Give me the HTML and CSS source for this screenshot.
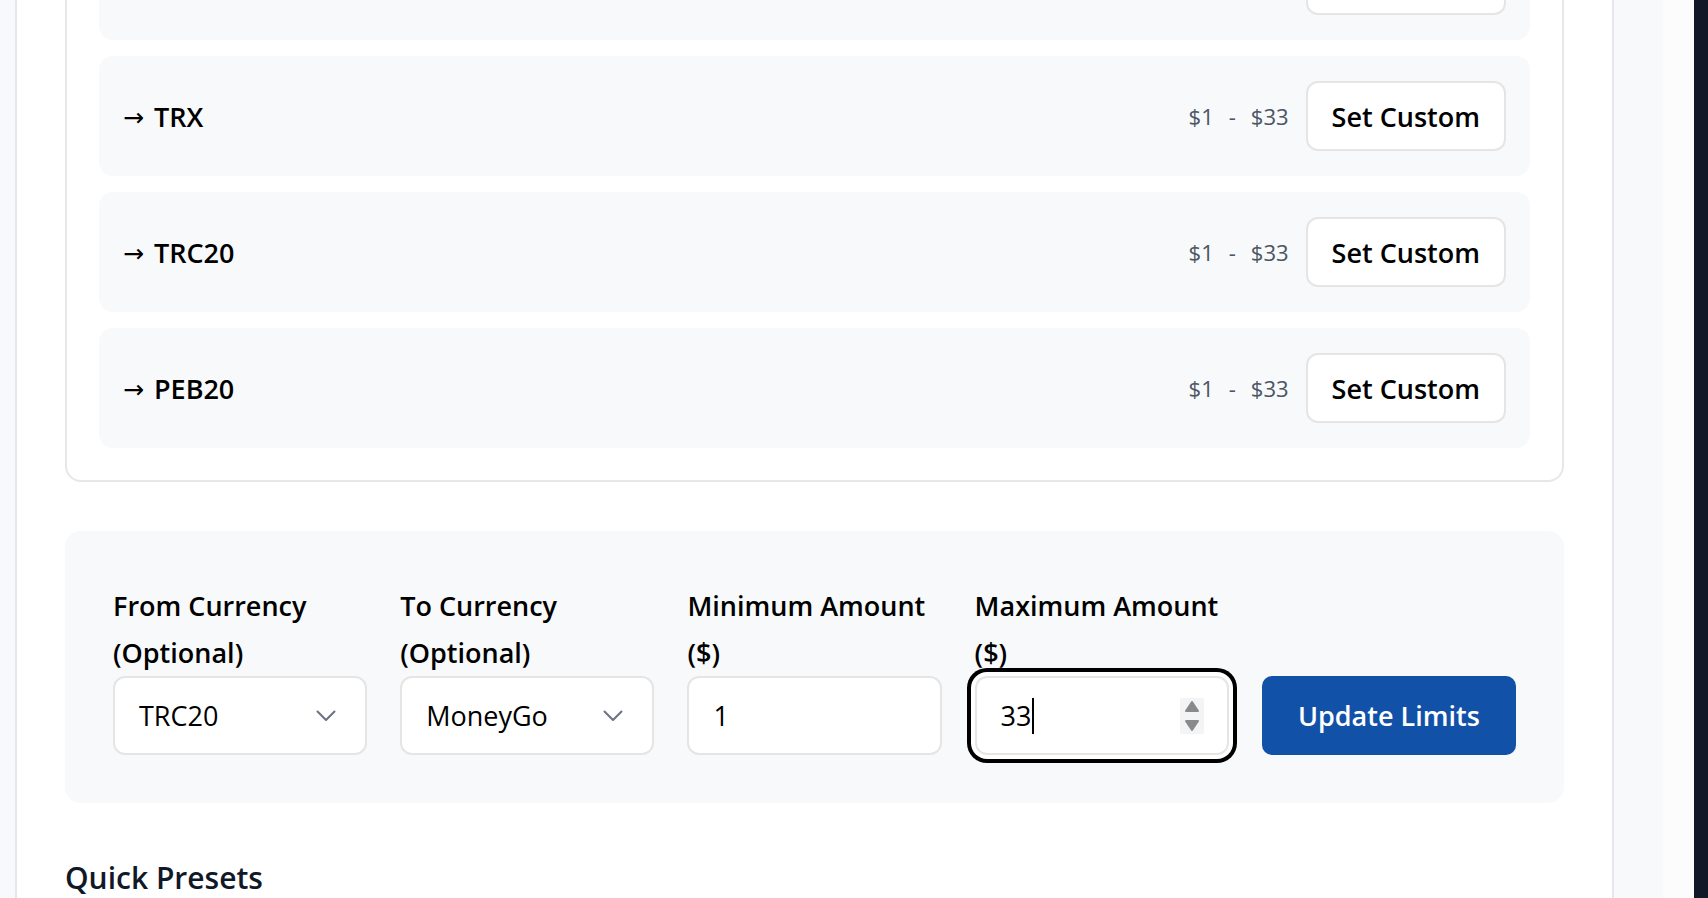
FILE: index.html
```html
<!DOCTYPE html>
<html lang="en">
<head>
<meta charset="utf-8">
<title>Exchange Limits</title>
<link rel="stylesheet" href="styles.css">
</head>
<body>
<div class="screen">
  <div class="gutter-left"></div>
  <main class="main">
    <section class="card">
      <div class="route-row">
        <span class="route-name"><span class="arrow">→</span> USDT</span>
        <div class="route-right">
          <div class="range"><span>$1</span><span>-</span><span>$33</span></div>
          <button class="btn-outline" type="button">Set Custom</button>
        </div>
      </div>
      <div class="route-row">
        <span class="route-name"><span class="arrow">→</span> TRX</span>
        <div class="route-right">
          <div class="range"><span>$1</span><span>-</span><span>$33</span></div>
          <button class="btn-outline" type="button">Set Custom</button>
        </div>
      </div>
      <div class="route-row">
        <span class="route-name"><span class="arrow">→</span> TRC20</span>
        <div class="route-right">
          <div class="range"><span>$1</span><span>-</span><span>$33</span></div>
          <button class="btn-outline" type="button">Set Custom</button>
        </div>
      </div>
      <div class="route-row">
        <span class="route-name"><span class="arrow">→</span> PEB20</span>
        <div class="route-right">
          <div class="range"><span>$1</span><span>-</span><span>$33</span></div>
          <button class="btn-outline" type="button">Set Custom</button>
        </div>
      </div>
    </section>

    <form class="limits">
      <div class="field">
        <label class="field-label">From Currency (Optional)</label>
        <div class="control">
          <span>TRC20</span>
          <svg class="chevron" width="20" height="12" viewBox="0 0 20 12"><path d="M1.5 1.5 L10 10 L18.5 1.5" fill="none" stroke="#6b7280" stroke-width="2" stroke-linecap="round" stroke-linejoin="round"/></svg>
        </div>
      </div>
      <div class="field">
        <label class="field-label">To Currency (Optional)</label>
        <div class="control">
          <span>MoneyGo</span>
          <svg class="chevron" width="20" height="12" viewBox="0 0 20 12"><path d="M1.5 1.5 L10 10 L18.5 1.5" fill="none" stroke="#6b7280" stroke-width="2" stroke-linecap="round" stroke-linejoin="round"/></svg>
        </div>
      </div>
      <div class="field">
        <label class="field-label">Minimum Amount ($)</label>
        <div class="control">
          <span>1</span>
        </div>
      </div>
      <div class="field">
        <label class="field-label">Maximum Amount ($)</label>
        <div class="control control-focus">
          <span class="value">33<span class="caret"></span></span>
          <svg class="spinner" width="24" height="36" viewBox="0 0 24 36"><rect x="0" y="0" width="24" height="36" fill="#f3f4f6"/><path d="M12 4 L18 13 L6 13 Z" fill="#8a8a8a" stroke="#8a8a8a" stroke-width="2" stroke-linejoin="round"/><path d="M6 23 L18 23 L12 32 Z" fill="#8a8a8a" stroke="#8a8a8a" stroke-width="2" stroke-linejoin="round"/></svg>
        </div>
      </div>
      <button class="btn-primary" type="button">Update Limits</button>
    </form>

    <h2 class="section-title">Quick Presets</h2>
  </main>
  <div class="gutter-right"><div class="gutter-a"></div><div class="gutter-b"></div></div>
  <div class="edge-dark"></div>
</div>
</body>
</html>
```
FILE: styles.css
```css
html, body {
  margin: 0;
  padding: 0;
}

body {
  font-family: "Open Sans", "Noto Sans", sans-serif;
  color: #000;
}

.screen {
  display: flex;
  height: 898px;
  overflow: hidden;
  background: #f8f9fa;
}

.gutter-left {
  width: 15px;
  flex: none;
  background: #f8f9fa;
}

.main {
  flex: 1;
  min-width: 0;
  background: #fff;
  border-left: 2px solid #e5e7eb;
  border-right: 2px solid #e5e7eb;
  padding: 0 48px;
}

.gutter-right {
  width: 80px;
  flex: none;
  display: flex;
}

.gutter-a {
  width: 49px;
  background: #f8f9fa;
}

.gutter-b {
  flex: 1;
  background: #fcfcfd;
}

.edge-dark {
  width: 14px;
  flex: none;
  background: #111827;
}

/* route card */
.card {
  margin-top: -114px;
  border: 2px solid #e5e7eb;
  border-radius: 16px;
  padding: 32px;
  display: flex;
  flex-direction: column;
  gap: 16px;
}

.route-row {
  height: 120px;
  box-sizing: border-box;
  padding: 0 24px;
  background: #f8f9fa;
  border-radius: 14px;
  display: flex;
  align-items: center;
  justify-content: space-between;
}

.route-name {
  font-size: 27px;
  font-weight: 600;
  color: #000;
}

.arrow {
  font-family: "DejaVu Sans", sans-serif;
  font-weight: 400;
  font-size: 25px;
  margin-right: 3px;
  position: relative;
  top: -1px;
}

.route-right {
  display: flex;
  align-items: center;
  gap: 17px;
}

.range {
  display: flex;
  gap: 15px;
  font-size: 22px;
  color: #4b5563;
}

.btn-outline {
  height: 70px;
  padding: 0 24px;
  border: 2px solid #e5e5e5;
  border-radius: 12px;
  background: #fff;
  font-family: "Open Sans", "Noto Sans", sans-serif;
  font-size: 27px;
  font-weight: 600;
  color: #000;
}

/* limits form */
.limits {
  margin-top: 49px;
  background: #f8f9fa;
  border-radius: 16px;
  padding: 51px 48px 48px;
  display: grid;
  grid-template-columns: repeat(5, minmax(0, 1fr));
  column-gap: 33px;
  align-items: end;
}

.field {
  display: flex;
  flex-direction: column;
}

.field-label {
  display: block;
  font-size: 27px;
  font-weight: 600;
  line-height: 47px;
  color: #000;
}

.control {
  height: 79px;
  box-sizing: border-box;
  border: 2px solid #e5e5e5;
  border-radius: 12px;
  background: #fff;
  padding: 0 24px;
  display: flex;
  align-items: center;
  justify-content: space-between;
  font-size: 27px;
  color: #000;
}

.chevron {
  margin-right: 5px;
  flex: none;
}

.control-focus {
  box-shadow: 0 0 0 4px #fff, 0 0 0 8px #000;
  border-radius: 12px;
}

.value {
  display: flex;
  align-items: center;
}

.caret {
  display: inline-block;
  width: 2px;
  height: 36px;
  background: #000;
  margin-left: 1px;
}

.spinner {
  flex: none;
  margin-right: -1px;
}

.btn-primary {
  height: 79px;
  border: none;
  border-radius: 10px;
  background: #1152a8;
  color: #fff;
  font-family: "Open Sans", "Noto Sans", sans-serif;
  font-size: 27px;
  font-weight: 600;
}

.section-title {
  margin: 52px 0 0;
  font-size: 30px;
  font-weight: 600;
  line-height: 45px;
  color: #111827;
}
```
